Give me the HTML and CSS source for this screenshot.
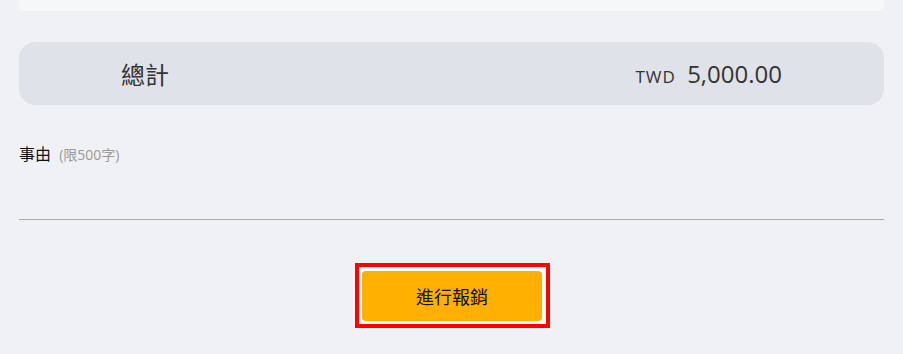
FILE: index.html
```html
<!DOCTYPE html>
<html>
<head>
    <meta charset="UTF-8" />
    <title>報銷</title>
    <link rel="stylesheet" href="styles.css">
</head>
<body>

<div class="page">
  <div class="top-card"></div>

  <div class="total">
    <span class="total-label">總計</span>
    <span class="total-amount"><small>TWD</small> 5,000.00</span>
  </div>

  <div class="field">
    <label class="field-label" for="reason">事由 <span class="hint">(限500字)</span></label>
    <textarea id="reason" class="field-input" rows="2"></textarea>
  </div>

  <div class="actions">
    <div class="highlight">
      <button type="button" class="submit">進行報銷</button>
    </div>
  </div>
</div>

</body>
</html>
```

FILE: styles.css
```css
* {
  box-sizing: border-box;
}

body {
  margin: 0;
  background: #f0f1f5;
  font-family: "Open Sans", "Noto Sans CJK TC", sans-serif;
  color: #222;
}

.page {
  padding: 0 19px;
}

/* card above, cut off by the top of the view */
.top-card {
  height: 11px;
  background: #f6f7f9;
}

/* total row */
.total {
  display: flex;
  justify-content: space-between;
  align-items: center;
  height: 63px;
  margin-top: 31px;
  padding: 0 102px;
  background: #e0e2e9;
  border-radius: 16px;
}

.total-label {
  font-size: 24px;
  color: #333;
}

.total-amount {
  font-size: 24px;
  color: #333;
}

.total-amount small {
  font-size: 17px;
  letter-spacing: 1px;
  margin-right: 5px;
}

/* reason field */
.field {
  margin-top: 36px;
}

.field-label {
  display: block;
  font-size: 16px;
  line-height: 26px;
  color: #111;
}

.hint {
  margin-left: 4px;
  font-size: 14px;
  color: #999;
}

.field-input {
  display: block;
  width: 100%;
  height: 52px;
  padding: 0;
  border: 0;
  border-bottom: 1px solid #aaa;
  background: transparent;
  resize: none;
  font: inherit;
}

/* submit */
.actions {
  display: flex;
  justify-content: center;
  margin-top: 43px;
  padding-left: 2px;
}

.highlight {
  border: 4px solid #ff0000;
  padding: 4px 4px 3px 3px;
  background: #fff;
}

.submit {
  display: block;
  width: 180px;
  height: 50px;
  border: 0;
  border-radius: 4px;
  background: #ffb000;
  color: #111;
  font-family: "Noto Sans CJK TC", sans-serif;
  font-size: 18px;
}
```
